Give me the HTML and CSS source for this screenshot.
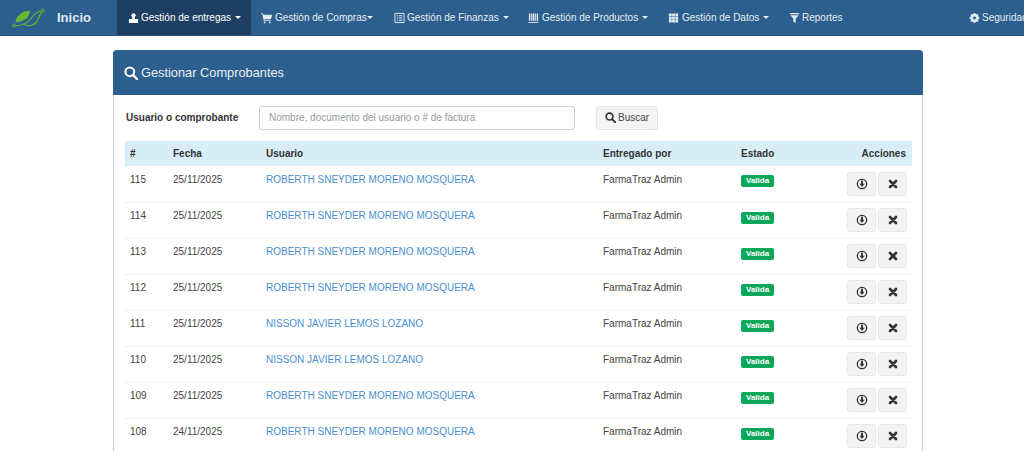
FILE: index.html
```html
<!DOCTYPE html>
<html lang="es">
<head>
<meta charset="utf-8">
<title>Gestionar Comprobantes</title>
<link rel="stylesheet" href="styles.css">
</head>
<body>
<svg class="defs" width="0" height="0" aria-hidden="true">
  <defs>
    <symbol id="i-search" viewBox="0 0 14 14"><circle cx="5.8" cy="5.8" r="4.4" fill="none" stroke="currentColor" stroke-width="2"/><path d="M9 9l4 4" stroke="currentColor" stroke-width="2.4" stroke-linecap="round"/></symbol>
    <symbol id="i-dl" viewBox="0 0 12 12"><circle cx="6" cy="6" r="4.7" fill="none" stroke="currentColor" stroke-width="1.3"/><path d="M5 2.8h2v3h1.5L6 9 3.5 5.8H5z" fill="currentColor"/></symbol>
    <symbol id="i-x" viewBox="0 0 12 12"><path d="M3 3l6 6M9 3L3 9" stroke="currentColor" stroke-width="2.700" stroke-linecap="round"/></symbol>
  </defs>
</svg>
<nav class="navbar">
  <a class="brand">
    <svg class="logo" viewBox="0 0 36 20" width="36" height="20" aria-hidden="true">
      <path d="M4.500 14.500C5 8.500 10 3 19 2.500 19 8.500 14 13.500 4.500 14.500z" fill="#6cb52f"/>
      <path d="M4 17.500C11 18 16 16 20 10.500 23 6 27 3.500 30.500 2.800M13 16.500C19 19 25 17 27 11.500 28 8.500 29 6 31 4" fill="none" stroke="#6cb52f" stroke-width="1.100"/>
      <circle cx="3" cy="17.500" r="1.400" fill="none" stroke="#6cb52f"/>
      <circle cx="32" cy="2.500" r="1.400" fill="none" stroke="#6cb52f"/>
    </svg>
    <span>Inicio</span>
  </a>
  <ul class="menu">
    <li class="item active w-entregas">
      <svg class="ico" viewBox="0 0 12 12" aria-hidden="true"><circle cx="6" cy="3" r="2.300" fill="currentColor"/><path d="M4.500 5h3v2h3.500v4.500H1V7h3.500z" fill="currentColor"/></svg>
      <span>Gestión de entregas</span><i class="caret"></i>
    </li>
    <li class="item w-compras">
      <svg class="ico" viewBox="0 0 12 12" aria-hidden="true"><path d="M0 1h2.200l.5 1.500H12l-1 4.500H3.800l.2 1H10.500v1H3L1.500 2H0z" fill="currentColor"/><circle cx="4" cy="10.800" r="1" fill="currentColor"/><circle cx="9.500" cy="10.800" r="1" fill="currentColor"/></svg>
      <span>Gestión de Compras</span><i class="caret tight"></i>
    </li>
    <li class="item w-finanzas">
      <svg class="ico" viewBox="0 0 12 12" aria-hidden="true"><path d="M1 1h10v10H1z" fill="none" stroke="currentColor"/><path d="M3 3h1.500v1H3zM5.500 3H9v1H5.500zM3 5.500h1.500v1H3zM5.500 5.500H9v1H5.500zM3 8h1.500v1H3zM5.500 8H9v1H5.500z" fill="currentColor"/></svg>
      <span>Gestión de Finanzas</span><i class="caret"></i>
    </li>
    <li class="item w-productos">
      <svg class="ico" viewBox="0 0 12 12" aria-hidden="true"><path d="M1 1h1.500v8H1zM3.300 1h1v8h-1zM5 1h2v8H5zM7.800 1h1v8h-1zM9.500 1H11v8H9.500z" fill="currentColor"/><path d="M.5 10.800h11" stroke="currentColor"/></svg>
      <span>Gestión de Productos</span><i class="caret"></i>
    </li>
    <li class="item w-datos">
      <svg class="ico" viewBox="0 0 12 12" aria-hidden="true"><path d="M1 1h3v3H1zM4.500 1h3v3h-3zM8 1h3v3H8zM1 4.500h3v3H1zM4.500 4.500h3v3h-3zM8 4.500h3v3H8zM1 8h3v3H1zM4.500 8h3v3h-3zM8 8h3v3H8z" fill="currentColor"/></svg>
      <span>Gestión de Datos</span><i class="caret"></i>
    </li>
    <li class="item w-reportes">
      <svg class="ico" viewBox="0 0 12 12" aria-hidden="true"><path d="M1 .5h10v1.500H1zM1.500 3h9L7.300 6.500V11.500L4.700 10V6.500z" fill="currentColor"/></svg>
      <span>Reportes</span>
    </li>
  </ul>
  <div class="right">
    <svg class="ico" viewBox="0 0 12 12" aria-hidden="true"><circle cx="6" cy="6" r="3.400" fill="none" stroke="currentColor" stroke-width="2.400"/><path d="M6 .5v11M.5 6h11M2.100 2.100l7.800 7.800M9.900 2.100l-7.800 7.800" stroke="currentColor" stroke-width="1.600"/><circle cx="6" cy="6" r="1.600" fill="#2c5f8e"/></svg>
    <span>Seguridad</span>
  </div>
</nav>

<main class="panel">
  <header class="panel-head">
    <svg class="head-ico"><use href="#i-search"/></svg>
    <h1>Gestionar Comprobantes</h1>
  </header>
  <div class="panel-body">
    <form class="search">
      <label for="q">Usuario o comprobante</label>
      <input id="q" type="text" placeholder="Nombre, documento del usuario o # de factura">
      <button type="button" class="btn-search"><svg class="btn-ico"><use href="#i-search"/></svg>Buscar</button>
    </form>
    <table class="grid">
      <thead>
        <tr><th class="c-num">#</th><th class="c-date">Fecha</th><th class="c-user">Usuario</th><th class="c-by">Entregado por</th><th class="c-state">Estado</th><th class="c-act">Acciones</th></tr>
      </thead>
      <tbody>
        <tr><td>115</td><td>25/11/2025</td><td><a>ROBERTH SNEYDER MORENO MOSQUERA</a></td><td>FarmaTraz Admin</td><td><b class="badge">Valida</b></td><td class="acts"><button class="act"><svg><use href="#i-dl"/></svg></button><button class="act"><svg><use href="#i-x"/></svg></button></td></tr>
        <tr><td>114</td><td>25/11/2025</td><td><a>ROBERTH SNEYDER MORENO MOSQUERA</a></td><td>FarmaTraz Admin</td><td><b class="badge">Valida</b></td><td class="acts"><button class="act"><svg><use href="#i-dl"/></svg></button><button class="act"><svg><use href="#i-x"/></svg></button></td></tr>
        <tr><td>113</td><td>25/11/2025</td><td><a>ROBERTH SNEYDER MORENO MOSQUERA</a></td><td>FarmaTraz Admin</td><td><b class="badge">Valida</b></td><td class="acts"><button class="act"><svg><use href="#i-dl"/></svg></button><button class="act"><svg><use href="#i-x"/></svg></button></td></tr>
        <tr><td>112</td><td>25/11/2025</td><td><a>ROBERTH SNEYDER MORENO MOSQUERA</a></td><td>FarmaTraz Admin</td><td><b class="badge">Valida</b></td><td class="acts"><button class="act"><svg><use href="#i-dl"/></svg></button><button class="act"><svg><use href="#i-x"/></svg></button></td></tr>
        <tr><td>111</td><td>25/11/2025</td><td><a>NISSON JAVIER LEMOS LOZANO</a></td><td>FarmaTraz Admin</td><td><b class="badge">Valida</b></td><td class="acts"><button class="act"><svg><use href="#i-dl"/></svg></button><button class="act"><svg><use href="#i-x"/></svg></button></td></tr>
        <tr><td>110</td><td>25/11/2025</td><td><a>NISSON JAVIER LEMOS LOZANO</a></td><td>FarmaTraz Admin</td><td><b class="badge">Valida</b></td><td class="acts"><button class="act"><svg><use href="#i-dl"/></svg></button><button class="act"><svg><use href="#i-x"/></svg></button></td></tr>
        <tr><td>109</td><td>25/11/2025</td><td><a>ROBERTH SNEYDER MORENO MOSQUERA</a></td><td>FarmaTraz Admin</td><td><b class="badge">Valida</b></td><td class="acts"><button class="act"><svg><use href="#i-dl"/></svg></button><button class="act"><svg><use href="#i-x"/></svg></button></td></tr>
        <tr><td>108</td><td>24/11/2025</td><td><a>ROBERTH SNEYDER MORENO MOSQUERA</a></td><td>FarmaTraz Admin</td><td><b class="badge">Valida</b></td><td class="acts"><button class="act"><svg><use href="#i-dl"/></svg></button><button class="act"><svg><use href="#i-x"/></svg></button></td></tr>
      </tbody>
    </table>
  </div>
</main>
</body>
</html>
```
FILE: styles.css
```css
* { box-sizing: border-box; }
html, body { margin: 0; height: 451px; overflow: hidden; background: #fff; }
body { font-family: "Liberation Sans", Arial, sans-serif; font-size: 10px; color: #333; }
.defs { position: absolute; }

.navbar { display: flex; align-items: stretch; height: 36px; background: #2c5f8e; color: #e4ecf3; border-bottom: 1px solid #28557f; white-space: nowrap; overflow: hidden; }
.brand { display: flex; align-items: center; width: 117px; flex: none; padding-left: 11px; }
.logo { flex: none; }
.brand span { margin-left: 10px; font-size: 13px; font-weight: 700; color: #dfe8f0; }
.menu { display: flex; list-style: none; margin: 0; padding: 0; flex: 1; }
.item { display: flex; align-items: center; padding-left: 11px; flex: none; }
.item.active { background: #1e3f63; color: #fff; }
.w-entregas { width: 134px; padding-right: 0; }
.w-compras { width: 132px; padding-left: 10px; }
.w-finanzas { width: 134px; padding-left: 11px; }
.w-productos { width: 140px; }
.w-datos { width: 121px; }
.w-reportes { width: 100px; padding-left: 11px; }
.ico { width: 11px; height: 12px; margin-right: 2px; flex: none; }
.w-compras .ico, .w-productos .ico, .w-datos .ico { margin-right: 3px; }
.caret { width: 0; height: 0; margin-left: 4px; border-top: 3px solid currentColor; border-left: 3px solid transparent; border-right: 3px solid transparent; }
.caret.tight { margin-left: 0; }
.right { display: flex; align-items: center; margin-left: auto; flex: none; width: 55px; }
.right .ico { margin-right: 2px; }

.panel { width: 810px; margin: 14px 0 0 113px; border: 1px solid #c3cfdc; border-top: 0; border-radius: 4px 4px 0 0; }
.panel-head { display: flex; align-items: center; height: 45px; margin: 0 -1px; padding-left: 11px; background: #2c5f8e; color: #e8eef4; border-radius: 4px 4px 0 0; }
.head-ico { width: 14px; height: 14px; margin-right: 3px; color: #fff; }
h1 { margin: 0; font-size: 12.8px; font-weight: 400; }
.panel-body { padding: 11px 10px 0 11px; }

.search { display: flex; align-items: center; height: 24px; }
.search label { width: 134px; flex: none; padding: 0 0 2px 1px; font-weight: 700; }
.search input { width: 316px; height: 24px; flex: none; padding: 0 9px 2px; border: 1px solid #ccc; border-radius: 3px; font: inherit; color: #555; }
.search input::placeholder { color: #999; }
.btn-search { display: flex; align-items: center; height: 24px; width: 62px; flex: none; margin-left: 21px; padding: 0 0 2px 8px; background: #f4f4f4; border: 1px solid #e6e6e6; border-radius: 3px; font: inherit; color: #444; }
.btn-ico { width: 11px; height: 11px; margin-right: 2px; color: #333; }

.grid { width: 787px; margin-top: 11px; border-collapse: collapse; table-layout: fixed; }
.grid th { height: 25px; padding: 0 0 1px 5px; background: #d9edf7; text-align: left; font-weight: 700; }
.c-num { width: 43px; }
.c-date { width: 93px; }
.c-user { width: 337px; }
.c-by { width: 138px; }
.c-state { width: 80px; }
.grid th.c-act { padding: 0 6px 1px 0; text-align: right; }
.grid td { height: 36px; padding: 0 0 9px 5px; border-bottom: 1px solid #eee; vertical-align: middle; color: #444; }
.grid a { color: #4a8fd0; }
.badge { display: inline-block; height: 12px; padding: 0 5px; background: #0aa858; color: #fff; border-radius: 2px; font-size: 8px; line-height: 12px; vertical-align: -3px; }
.grid td.acts { padding: 0 5px 0 0; text-align: right; font-size: 0; }
.act { display: inline-flex; align-items: center; justify-content: center; width: 29px; height: 24px; margin-left: 2px; padding: 0; background: #f3f3f3; border: 1px solid #e8e8e8; border-radius: 3px; color: #333; }
.act svg { width: 12px; height: 12px; }
```
